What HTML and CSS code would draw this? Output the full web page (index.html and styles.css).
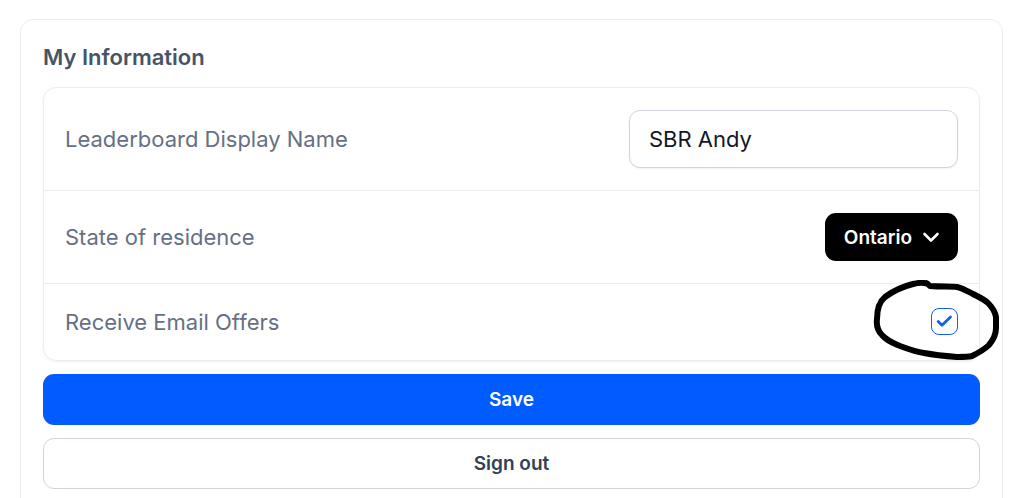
FILE: index.html
```html
<!DOCTYPE html>
<html lang="en">
<head>
    <meta charset="UTF-8">
    <meta name="viewport" content="width=device-width, initial-scale=1.0">
    <title>My Information</title>
    <link rel="stylesheet" href="styles.css">
</head>
<body>
    <form class="card">
        <h2 class="card-title">My Information</h2>
        <div class="panel">
            <div class="row">
                <label for="display-name">Leaderboard Display Name</label>
                <input type="text" id="display-name" class="text-input" value="SBR Andy">
            </div>
            <div class="row">
                <span id="state-label">State of residence</span>
                <button type="button" class="dropdown" id="state" aria-haspopup="listbox" aria-labelledby="state-label state">
                    Ontario
                    <svg width="18" height="12" viewBox="0 0 18 12" fill="none" stroke="currentColor" stroke-width="2.6" stroke-linecap="round" stroke-linejoin="round"><path d="M2.500 3L9 9.500L15.500 3"/></svg>
                </button>
            </div>
            <div class="row row-check">
                <label for="email-offers">Receive Email Offers</label>
                <div class="check">
                    <input type="checkbox" id="email-offers" checked>
                    <svg class="tick" width="27" height="27" viewBox="0 0 27 27" fill="none" stroke="#155eef" stroke-width="2.8" stroke-linecap="round" stroke-linejoin="round"><path d="M7.200 13.500L11 17.300L19.500 9"/></svg>
                    <!-- hand drawn ring around the checkbox -->
                    <svg class="ring" width="132" height="82" viewBox="0 0 132 82" fill="none" stroke="#000" stroke-width="6" stroke-linecap="round" stroke-linejoin="round"><path d="M57 3.500C53 2.500 47 3 43 4C35 6 23 11 15 17C9 22 7 30 7 39C6 47 8 51 12 55C17 61 23 63 30 66C38 69 46 72 54 73C65 75 75 76 87 77C93 77 98 77 102 76C108 73 114 70 119 65C124 59 126 54 126 48L126 37C125 31 122 27 118 23C114 19 109 17 103 14C97 11 92 8 87 7C80 6 72 7 60 6L57 3.500"/></svg>
                </div>
            </div>
        </div>
        <button type="button" class="btn btn-primary">Save</button>
        <button type="button" class="btn btn-outline">Sign out</button>
    </form>
</body>
</html>
```
FILE: styles.css
```css
* {
    box-sizing: border-box;
}
body {
    font-family: Inter, sans-serif;
    margin: 19px 17px 0 20px;
    background-color: #ffffff;
}
.card {
    display: flex;
    flex-direction: column;
    gap: 13px;
    padding: 22px;
    border: 1px solid #eaecf0;
    border-radius: 13px;
}
.card-title {
    margin: 0 0 2px;
    font-size: 22px;
    line-height: 30px;
    font-weight: 600;
    color: #475467;
}
.panel {
    border: 1px solid #eaecf0;
    border-radius: 13px;
    box-shadow: 0 1px 2px rgba(16, 24, 40, 0.05);
}
.row {
    display: flex;
    justify-content: space-between;
    align-items: center;
    padding: 22px 21px;
    font-size: 22px;
    line-height: 28px;
    font-weight: 400;
    color: #667085;
}
.row + .row {
    border-top: 1px solid #eaecf0;
}
.row-check {
    align-items: flex-start;
    padding: 24px 21px;
}
.text-input {
    width: 329px;
    min-width: 0;
    height: 58px;
    padding: 0 19px;
    font: inherit;
    color: #101828;
    background: #ffffff;
    border: 1px solid #d0d5dd;
    border-radius: 11px;
    box-shadow: 0 1px 2px rgba(16, 24, 40, 0.05);
    outline: none;
}
.dropdown {
    display: flex;
    align-items: center;
    gap: 10px;
    height: 48px;
    padding: 0 18px 0 19px;
    font-family: inherit;
    font-size: 19px;
    font-weight: 600;
    color: #ffffff;
    background-color: #000000;
    border: none;
    border-radius: 11px;
    cursor: pointer;
}
.check {
    position: relative;
    width: 27px;
    height: 27px;
}
.check input {
    appearance: none;
    display: block;
    width: 27px;
    height: 27px;
    margin: 0;
    border: 1px solid #155eef;
    border-radius: 8px;
    cursor: pointer;
}
.tick {
    position: absolute;
    top: 0;
    left: 0;
    visibility: hidden;
    pointer-events: none;
}
.check input:checked + .tick {
    visibility: visible;
}
.ring {
    position: absolute;
    top: -28px;
    left: -61px;
    pointer-events: none;
}
.btn {
    height: 51px;
    font-family: inherit;
    font-size: 19px;
    font-weight: 600;
    border-radius: 11px;
    cursor: pointer;
}
.btn-primary {
    color: #ffffff;
    background-color: #005cff;
    border: none;
}
.btn-outline {
    color: #344054;
    background-color: #ffffff;
    border: 1px solid #d0d5dd;
}
```
